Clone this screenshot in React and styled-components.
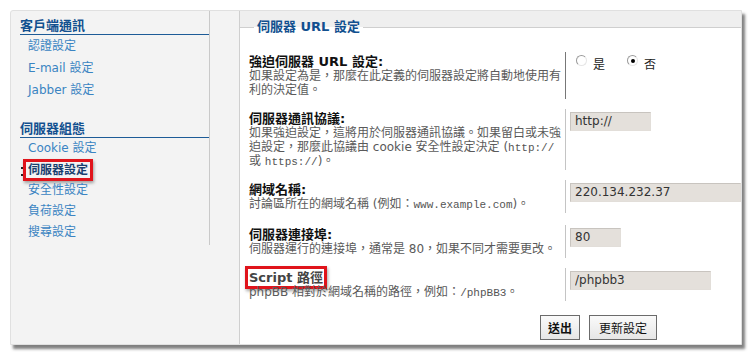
import React from 'react';
import styled, { createGlobalStyle } from 'styled-components';

const Global = createGlobalStyle`
  body {
    margin: 0;
    background: #ffffff;
    font-family: "DejaVu Sans", "Noto Sans CJK TC", sans-serif;
  }
`;

const Panel = styled.div`
  display: flex;
  box-sizing: border-box;
  width: 732px;
  height: 335px;
  margin: 10px;
  background: #f3f3f3;
  border: 1px solid #e0e0e0;
  border-radius: 3px 0 0 0;
  box-shadow: 3px 4px 3px rgba(0, 0, 0, 0.5);
`;

const Sidebar = styled.div`
  box-sizing: border-box;
  width: 200px;
  align-self: flex-start;
  padding: 7px 0 2px 9px;
  border-right: 1px solid #c9c9c9;
`;

const MenuTitle = styled.div`
  margin-top: ${(p) => (p.$first ? '0' : '20px')};
  font-size: 13px;
  line-height: 16px;
  font-weight: bold;
  color: #12508f;
  border-bottom: 1px solid #1d5b97;
`;

const MenuItem = styled.div`
  position: relative;
  height: ${(p) => (p.$tall ? '22px' : '21px')};
  line-height: ${(p) => (p.$tall ? '22px' : '21px')};
  padding-left: 8px;
  font-size: 12px;
  color: #3a84c2;
  white-space: nowrap;
`;

const Active = styled.span`
  display: inline-block;
  margin-left: -5px;
  padding: 0 2px;
  line-height: 16px;
  border: 3px solid #e0141b;
  font-weight: bold;
  color: #18406f;
  box-shadow: 1px 2px 3px rgba(0, 0, 0, 0.35);

  &::before {
    content: '';
    position: absolute;
    left: 1px;
    top: 8px;
    width: 2px;
    height: 5px;
    border-top: 2px solid #222;
    border-bottom: 2px solid #222;
  }
`;

const Main = styled.div`
  flex: 1;
  display: flex;
  padding-left: 29px;
`;

const Content = styled.div`
  flex: 1;
  display: flex;
  flex-direction: column;
  background: #efefef;
  border-left: 1px solid #cfcfcf;
`;

const Fieldset = styled.fieldset`
  flex: 1;
  margin: 8px 0 0;
  padding: 17px 0 0;
  border: none;
  border-top: 1px solid #cfcfcf;
  background: #ffffff;
  min-width: 0;
`;

const Legend = styled.legend`
  margin-left: 14px;
  padding: 0 3px;
  font-size: 13px;
  line-height: 16px;
  font-weight: bold;
  color: #12508f;
`;

const Rows = styled.div`
  display: flex;
  flex-direction: column;
  gap: 10px;
`;

const Row = styled.div`
  display: grid;
  grid-template-columns: 325px 1fr;
  margin-top: ${(p) => (p.$extra ? '2px' : '0')};
`;

const LabelCell = styled.div`
  padding: 2px 4px 2px 9px;
`;

const Title = styled.div`
  font-size: 13px;
  line-height: 15px;
  font-weight: bold;
  color: #111;
`;

const Highlight = styled.span`
  display: inline-block;
  margin: -4px 0 -4px -4px;
  padding: 1px 1px;
  line-height: 15px;
  vertical-align: top;
  border: 3px solid #e0141b;
  color: #444;
  box-shadow: 1px 2px 3px rgba(0, 0, 0, 0.35);
`;

const Desc = styled.div`
  font-size: 12px;
  line-height: 14px;
  color: #5a5a5a;
`;

const Mono = styled.span`
  font-family: "Liberation Mono", monospace;
  font-size: 11px;
  line-height: 1;
  color: #555;
`;

const ValueCell = styled.div`
  padding: 1px 0 0 4px;
  border-left: 1px solid ${(p) => (p.$dark ? '#777' : '#c4c4c4')};
`;

const RadioGroup = styled.div`
  display: flex;
  align-items: center;
  gap: 22px;
  padding: 2px 0 0 6px;
  height: 16px;
`;

const RadioLabel = styled.label`
  display: flex;
  align-items: center;
  gap: 6px;
  font-size: 12px;
  color: #222;
`;

const Radio = styled.span`
  position: relative;
  width: 9px;
  height: 9px;
  margin-top: -6px;
  border-radius: 50%;
  border: 1px solid #9a9a9a;
  border-right-color: #e6e6e6;
  border-bottom-color: #e6e6e6;
  background: #fff;

  &::after {
    content: '';
    display: ${(p) => (p.$checked ? 'block' : 'none')};
    position: absolute;
    left: 3px;
    top: 3px;
    width: 4px;
    height: 4px;
    border-radius: 50%;
    background: #000;
  }
`;

const Input = styled.input`
  box-sizing: border-box;
  width: ${(p) => p.$w}px;
  height: 19px;
  padding: 0 4px;
  border: 1px solid #e2ded9;
  border-top-color: #c8c4bf;
  border-left-color: #c8c4bf;
  background: #e4e0db;
  font-family: "DejaVu Sans", sans-serif;
  font-size: 12px;
  color: #333;
  outline: none;
`;

const Buttons = styled.div`
  display: flex;
  gap: 9px;
  margin-top: 14px;
  padding-left: 300px;
`;

const Button = styled.button`
  box-sizing: border-box;
  width: ${(p) => p.$w}px;
  height: 25px;
  padding: 0;
  border: 1px solid #6b6b6b;
  background: linear-gradient(#fafafa, #e6e6e6);
  font-family: "Noto Sans CJK TC", sans-serif;
  font-size: 12px;
  font-weight: ${(p) => (p.$bold ? 'bold' : 'normal')};
  color: #111;
`;

const groups = [
  { title: '客戶端通訊', items: ['認證設定', 'E-mail 設定', 'Jabber 設定'], tall: true },
  { title: '伺服器組態', items: ['Cookie 設定', '伺服器設定', '安全性設定', '負荷設定', '搜尋設定'], active: '伺服器設定' },
];

export default function App() {
  return (
    <>
      <Global />
      <Panel>
        <Sidebar>
          {groups.map((g, gi) => (
            <div key={g.title}>
              <MenuTitle $first={gi === 0}>{g.title}</MenuTitle>
              {g.items.map((it) => (
                <MenuItem key={it} $tall={g.tall}>
                  {it === g.active ? <Active>{it}</Active> : it}
                </MenuItem>
              ))}
            </div>
          ))}
        </Sidebar>
        <Main>
          <Content>
            <Fieldset>
              <Legend>伺服器 URL 設定</Legend>
              <Rows>
                <Row>
                  <LabelCell>
                    <Title>強迫伺服器 URL 設定:</Title>
                    <Desc>如果設定為是，那麼在此定義的伺服器設定將自動地使用有利的決定值。</Desc>
                  </LabelCell>
                  <ValueCell $dark>
                    <RadioGroup>
                      <RadioLabel><Radio />是</RadioLabel>
                      <RadioLabel><Radio $checked />否</RadioLabel>
                    </RadioGroup>
                  </ValueCell>
                </Row>
                <Row>
                  <LabelCell>
                    <Title>伺服器通訊協議:</Title>
                    <Desc>
                      如果強迫設定，這將用於伺服器通訊協議。如果留白或未強迫設定，那麼此協議由 cookie 安全性設定決定 (<Mono>http://</Mono> 或 <Mono>https://</Mono>)。
                    </Desc>
                  </LabelCell>
                  <ValueCell>
                    <Input $w={81} readOnly value="http://" />
                  </ValueCell>
                </Row>
                <Row>
                  <LabelCell>
                    <Title>網域名稱:</Title>
                    <Desc>討論區所在的網域名稱 (例如：<Mono>www.example.com</Mono>)。</Desc>
                  </LabelCell>
                  <ValueCell>
                    <Input $w={171} readOnly value="220.134.232.37" />
                  </ValueCell>
                </Row>
                <Row $extra>
                  <LabelCell>
                    <Title>伺服器連接埠:</Title>
                    <Desc>伺服器運行的連接埠，通常是 80，如果不同才需要更改。</Desc>
                  </LabelCell>
                  <ValueCell>
                    <Input $w={51} readOnly value="80" />
                  </ValueCell>
                </Row>
                <Row>
                  <LabelCell>
                    <Title><Highlight>Script 路徑</Highlight></Title>
                    <Desc>phpBB 相對於網域名稱的路徑，例如：<Mono>/phpBB3</Mono>。</Desc>
                  </LabelCell>
                  <ValueCell>
                    <Input $w={141} readOnly value="/phpbb3" />
                  </ValueCell>
                </Row>
              </Rows>
              <Buttons>
                <Button $w={40} $bold>送出</Button>
                <Button $w={68}>更新設定</Button>
              </Buttons>
            </Fieldset>
          </Content>
        </Main>
      </Panel>
    </>
  );
}
